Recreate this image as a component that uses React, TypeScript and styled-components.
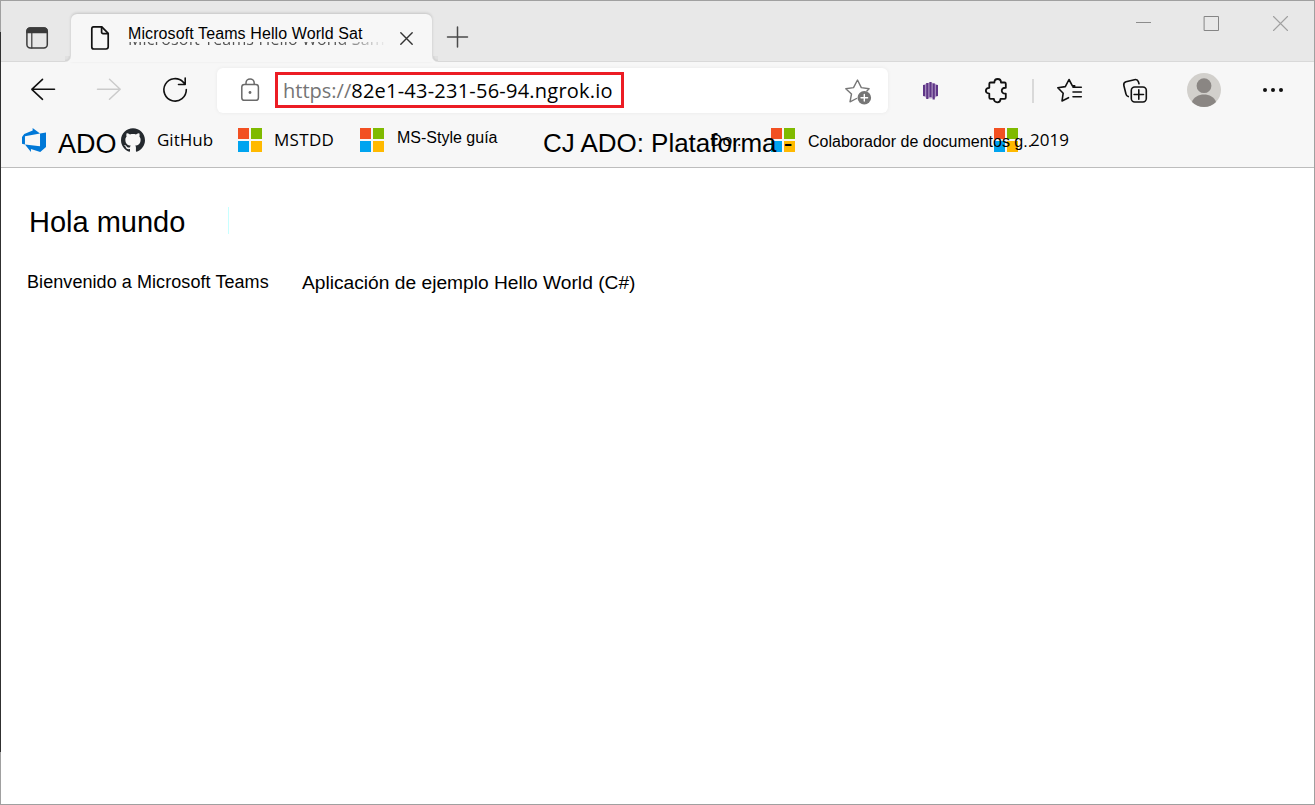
import React from 'react';
import styled, { createGlobalStyle } from 'styled-components';
import { SiGithub } from 'react-icons/si';

const GlobalStyle = createGlobalStyle`
  * { box-sizing: border-box; }
  body { margin: 0; background: #fff; overflow: hidden; }
`;

const sans = `"Liberation Sans", Arial, sans-serif`;
const ui = `"Open Sans", "Noto Sans", sans-serif`;

const Window = styled.div`
  width: 1315px;
  height: 805px;
  display: flex;
  flex-direction: column;
  background: #fff;
  border: 1px solid #a0a0a0;
  font-family: ${sans};
  color: #000;
`;

const EdgeShade = styled.div`
  position: absolute;
  left: 0;
  top: 32px;
  width: 1px;
  height: 720px;
  background: #303030;
`;

const TabStrip = styled.div`
  height: 61px;
  flex: none;
  display: flex;
  align-items: flex-start;
  background: #e8e8e8;
  box-shadow: inset 0 -1px 0 #d9d9d9;
`;

const Glyph = styled.svg<{ $w: number; $h: number; $l?: number; $t?: number; $c?: string; $s?: number }>`
  display: block;
  flex: none;
  width: ${p => p.$w}px;
  height: ${p => p.$h}px;
  margin-left: ${p => p.$l ?? 0}px;
  margin-top: ${p => p.$t ?? 0}px;
  overflow: visible;
  fill: none;
  stroke: ${p => p.$c ?? '#111'};
  stroke-width: ${p => p.$s ?? 1.5};
  stroke-linecap: round;
  stroke-linejoin: round;
`;

const Tab = styled.div`
  position: relative;
  width: 361px;
  height: 48px;
  margin: 13px 0 0 22px;
  display: flex;
  align-items: flex-start;
  background: #f7f7f7;
  border-radius: 6px 6px 0 0;
  box-shadow: 0 -1px 3px rgba(0, 0, 0, 0.16);
  &::before,
  &::after {
    content: '';
    position: absolute;
    bottom: 0;
    width: 6px;
    height: 6px;
  }
  &::before {
    left: -6px;
    background: radial-gradient(circle at 0 0, #e0e0e0 3px, #d2d2d2 5px, #f7f7f7 6.5px);
  }
  &::after {
    right: -6px;
    background: radial-gradient(circle at 100% 0, #e0e0e0 3px, #d2d2d2 5px, #f7f7f7 6.5px);
  }
`;

const TabTitle = styled.div`
  position: relative;
  width: 256px;
  margin: 11px 0 0 19px;
  font-size: 16px;
  letter-spacing: 0.1px;
  line-height: 18px;
  white-space: nowrap;
`;

const TitleShade = styled.div`
  position: absolute;
  left: 0;
  top: 17px;
  width: 260px;
  height: 3px;
  overflow: hidden;
  color: #555;
  mask-image: linear-gradient(90deg, #000 80%, transparent);
  font-family: ${ui};
  font-size: 16px;
  letter-spacing: 0.15px;
  line-height: 20px;
  span { display: block; margin-top: -13px; }
`;

const Toolbar = styled.div`
  height: 55px;
  flex: none;
  display: flex;
  align-items: flex-start;
  background: #f7f7f7;
`;

const AddressBar = styled.div`
  width: 671px;
  height: 45px;
  margin: 6px 0 0 30px;
  display: flex;
  align-items: flex-start;
  background: #fff;
  border-radius: 6px;
  box-shadow: 0 0 4px rgba(0, 0, 0, 0.06);
`;

const UrlBox = styled.div`
  width: 349px;
  height: 36px;
  margin: 4px 0 0 16px;
  padding-left: 5px;
  border: 3px solid #ec1c24;
  font-family: ${ui};
  font-size: 20px;
  letter-spacing: 0.23px;
  line-height: 32px;
  white-space: nowrap;
  span { color: #757575; letter-spacing: 0; }
`;

const Separator = styled.div`
  width: 2px;
  height: 24px;
  margin: 17px 0 0 25px;
  background: #d9d9d9;
`;

const Bookmarks = styled.div`
  height: 51px;
  flex: none;
  display: flex;
  align-items: flex-start;
  padding-left: 21px;
  background: #f7f7f7;
  border-bottom: 1px solid #bdbdbd;
`;

const Label = styled.span<{ $w: number; $size: number; $t: number; $l?: number; $ui?: boolean; $ls?: number }>`
  position: relative;
  z-index: 1;
  flex: none;
  width: ${p => p.$w}px;
  margin-left: ${p => p.$l ?? 0}px;
  margin-top: ${p => p.$t}px;
  font-family: ${p => (p.$ui ? ui : sans)};
  font-size: ${p => p.$size}px;
  letter-spacing: ${p => p.$ls ?? 0}px;
  line-height: 30px;
  white-space: nowrap;
`;

const Squares = styled.div`
  flex: none;
  display: grid;
  grid-template-columns: 11px 11px;
  grid-template-rows: 11px 11px;
  gap: 2px;
  margin-top: 11px;
  i:nth-child(1) { background: #f25022; }
  i:nth-child(2) { background: #7fba00; }
  i:nth-child(3) { background: #00a4ef; }
  i:nth-child(4) { background: #ffb900; }
`;

const GithubMark = styled(SiGithub)`
  flex: none;
  width: 24px;
  height: 24px;
  margin-top: 11px;
  color: #24292e;
`;

const Page = styled.main`
  flex: 1;
  padding: 36px 26px;
`;

const Heading = styled.h1`
  display: flex;
  align-items: center;
  margin: 0 0 0 2px;
  font-size: 29px;
  font-weight: 400;
  line-height: 36px;
`;

const Caret = styled.span`
  width: 1px;
  height: 27px;
  margin: -4px 0 0 43px;
  background: #c8ffff;
`;

const Welcome = styled.div`
  display: flex;
  margin-top: 31px;
  line-height: 22px;
  white-space: nowrap;
`;

const Phrase = styled.span<{ $size: number; $w: number; $t?: number; $ls?: number }>`
  width: ${p => p.$w}px;
  margin-top: ${p => p.$t ?? 0}px;
  font-size: ${p => p.$size}px;
  letter-spacing: ${p => p.$ls ?? 0}px;
`;

const MicrosoftLogo = () => (
  <Squares><i /><i /><i /><i /></Squares>
);

export default function App() {
  return (
    <>
      <GlobalStyle />
      <Window>
        <EdgeShade />
        <TabStrip>
          <Glyph $w={23} $h={22} $l={25} $t={26} $c="#3b3b3b" viewBox="0 0 23 22">
            <rect x="0.9" y="0.9" width="20.4" height="20" rx="3.5" />
            <path d="M1 5.5V4a3 3 0 0 1 3-3h14a3 3 0 0 1 3 3v1.5z" fill="#3b3b3b" />
            <path d="M5.8 6v15" strokeWidth="1.2" />
          </Glyph>
          <Tab>
            <Glyph $w={18} $h={24} $l={20} $t={12} $s={1.7} viewBox="0 0 18 24">
              <path d="M2.6.8h8.2l6.4 6.6v13.4a2.2 2.2 0 0 1-2.2 2.2H2.8A2 2 0 0 1 .8 21V2.8A2 2 0 0 1 2.6.8z" />
              <path d="M10.6 1v5.2a1.4 1.4 0 0 0 1.4 1.4h5" />
            </Glyph>
            <TabTitle>
              Microsoft Teams Hello World Sat
              <TitleShade aria-hidden><span>Microsoft Teams Hello World Sam</span></TitleShade>
            </TabTitle>
            <Glyph $w={13} $h={13} $l={16} $t={18} $c="#333" $s={1.4} viewBox="0 0 13 13">
              <path d="M.8.8l11.4 11.4M12.2.8L.8 12.2" />
            </Glyph>
          </Tab>
          <Glyph $w={21} $h={21} $l={15} $t={25} $c="#4a4a4a" viewBox="0 0 21 21">
            <path d="M10.5 1v20M.5 11h20" />
          </Glyph>
          <Glyph $w={15} $h={15} $l={668} $t={15} $c="#8c8c8c" $s={1} viewBox="0 0 15 15">
            <path d="M0 6.5h15" strokeLinecap="butt" />
          </Glyph>
          <Glyph $w={15} $h={15} $l={53} $t={15} $c="#858585" $s={1} viewBox="0 0 15 15">
            <path d="M.5.5h14v14h-14z" />
          </Glyph>
          <Glyph $w={15} $h={15} $l={54} $t={15} $c="#a0a0a0" $s={1.1} viewBox="0 0 15 15">
            <path d="M.5.5l14 14M14.5.5l-14 14" />
          </Glyph>
        </TabStrip>

        <Toolbar>
          <Glyph $w={24} $h={22} $l={30} $t={16} $s={1.6} viewBox="0 0 24 22">
            <path d="M23.5 11.3H.8M11.5 1.3L.8 11.3l10.7 10" />
          </Glyph>
          <Glyph $w={24} $h={22} $l={42} $t={16} $c="#cbcbcb" viewBox="0 0 24 22">
            <path d="M.5 11.3h22.7M12.5 1.3l10.7 10-10.7 10" />
          </Glyph>
          <Glyph $w={24} $h={25} $l={42} $t={15} $s={1.6} viewBox="0 0 24 25">
            <path d="M23.3 12.6A11.2 11.2 0 1 1 20.2 5.1L22.2 7.2M22.2 1v6.5H15.5" />
          </Glyph>
          <AddressBar>
            <Glyph $w={18} $h={23} $l={24} $t={11} $c="#6a6a6a" viewBox="0 0 18 23">
              <rect x=".8" y="5.5" width="16.6" height="15.8" rx="2.6" />
              <path d="M5 5.3V4a4 4 0 0 1 8.2 0v1.3" />
              <circle cx="9" cy="13.5" r="1.4" fill="#6a6a6a" stroke="none" />
            </Glyph>
            <UrlBox><span>https://</span>82e1-43-231-56-94.ngrok.io</UrlBox>
            <Glyph $w={27} $h={26} $l={221} $t={11} $c="#777" $s={1.4} viewBox="0 0 27 26">
              <path d="M11.5 19.5L5 22.8l1.5-7.8-5.7-5.3 7.7-1.1L12.5 1l3.8 7.6 7.8 1.1-2.2 2.2" />
              <circle cx="19.3" cy="18.7" r="6.8" fill="#767676" stroke="none" />
              <path d="M19.3 15.4v6.6M16 18.7h6.6" stroke="#fff" />
            </Glyph>
          </AddressBar>
          <Glyph $w={15} $h={18} $l={35} $t={20} $c="#5f3687" $s={2.2} viewBox="0 0 15 18">
            <path fill="#b9a3cc" stroke="none" d="M0 3Q7.5-2 15 3v11Q7.5 19 0 14z" />
            <path strokeLinecap="butt" d="M1.1 3v11M4.3 1v16M7.5 0v15M10.7 1.5v16M13.9 3v11" />
          </Glyph>
          <Glyph $w={22} $h={26} $l={47} $t={16} $s={1.8} viewBox="0 0 22 26">
            <path d="M5.6 4.5h3.800C9.400-.2 16-.2 16 4.500h3.500a1.300 1.300 0 0 1 1.300 1.300v4c-5.400-.6-5.400 6.400 0 5.800v4a1.300 1.300 0 0 1-1.300 1.300h-4c0 4.500-6.600 4.500-6.600 0H5.600a1.300 1.300 0 0 1-1.300-1.300v-4c-4.600 0-4.600-5.800 0-5.800v-4a1.300 1.300 0 0 1 1.300-1.300z" />
          </Glyph>
          <Separator />
          <Glyph $w={25} $h={24} $l={23} $t={17} $s={1.6} viewBox="0 0 25 24">
            <path d="M11.5 18.7L5 22l1.200-7.800L.8 8.700l7.500-1.100L12 .5l3.400 6.400h2.300M16 8.200h8.300M16 13h8.300M16 17.800h8.300" />
          </Glyph>
          <Glyph $w={24} $h={24} $l={41} $t={17} $s={1.6} viewBox="0 0 24 24">
            <rect x="8.3" y="8" width="15" height="15" rx="3.4" />
            <path d="M15.800 10.800v9.400M11.100 15.500h9.400M5.300 17.600C3.800 17.100 3.300 16.600 2.900 14.800L.9 6.700C.4 4.700 1.100 3.400 3 2.800L11.400.7c2.200-.5 3.400.2 4 2l.6 2" />
          </Glyph>
          <Glyph $w={34} $h={34} $l={40} $t={11} viewBox="0 0 34 34">
            <circle cx="17" cy="17" r="17" fill="#d2d0cc" stroke="none" />
            <circle cx="17" cy="12.7" r="7.4" fill="#8a8683" stroke="none" />
            <path d="M5 29C8 19 26 19 29 29Q24 34 17 34T5 29z" fill="#8a8683" stroke="none" />
          </Glyph>
          <Glyph $w={20} $h={4} $l={42} $t={26} viewBox="0 0 20 4">
            <g fill="#111" stroke="none"><circle cx="2" cy="2" r="2" /><circle cx="10" cy="2" r="2" /><circle cx="18" cy="2" r="2" /></g>
          </Glyph>
        </Toolbar>

        <Bookmarks>
          <Glyph $w={24} $h={24} $t={11} viewBox="0 0 24 24">
            <path fill="#0078d7" stroke="none" d="M0 8.877L2.247 5.91l8.405-3.416V.022l7.37 5.393L2.966 8.338v8.225L0 15.707zm24-4.45v14.651l-5.753 4.9-9.303-3.057v3.056l-5.978-7.416 15.057 1.798V5.415z" />
          </Glyph>
          <Label $w={63} $l={12} $size={27} $t={12}>ADO</Label>
          <GithubMark />
          <Label $w={81} $l={12} $size={17} $t={8} $ui>GitHub</Label>
          <MicrosoftLogo />
          <Label $w={86} $l={12} $size={17} $t={8} $ls={0.3} $ui>MSTDD</Label>
          <MicrosoftLogo />
          <Label $w={146} $l={13} $size={16} $t={6}>MS-Style guía</Label>
          <Label $w={167} $size={26} $t={11} $ls={-0.03}>CJ ADO: Plataforma -</Label>
          <Label $w={61} $size={17} $t={8} $ui>Do..</Label>
          <MicrosoftLogo />
          <Label $w={186} $l={13} $size={16} $t={10}>Colaborador de documentos g..</Label>
          <MicrosoftLogo />
          <Label $w={60} $l={12} $size={17} $t={8} $ui>2019</Label>
        </Bookmarks>

        <Page>
          <Heading>Hola mundo<Caret /></Heading>
          <Welcome>
            <Phrase $w={275} $size={18} $ls={0.07}>Bienvenido a Microsoft Teams</Phrase>
            <Phrase $w={340} $size={19.2} $t={1}>Aplicación de ejemplo Hello World (C#)</Phrase>
          </Welcome>
        </Page>
      </Window>
    </>
  );
}
